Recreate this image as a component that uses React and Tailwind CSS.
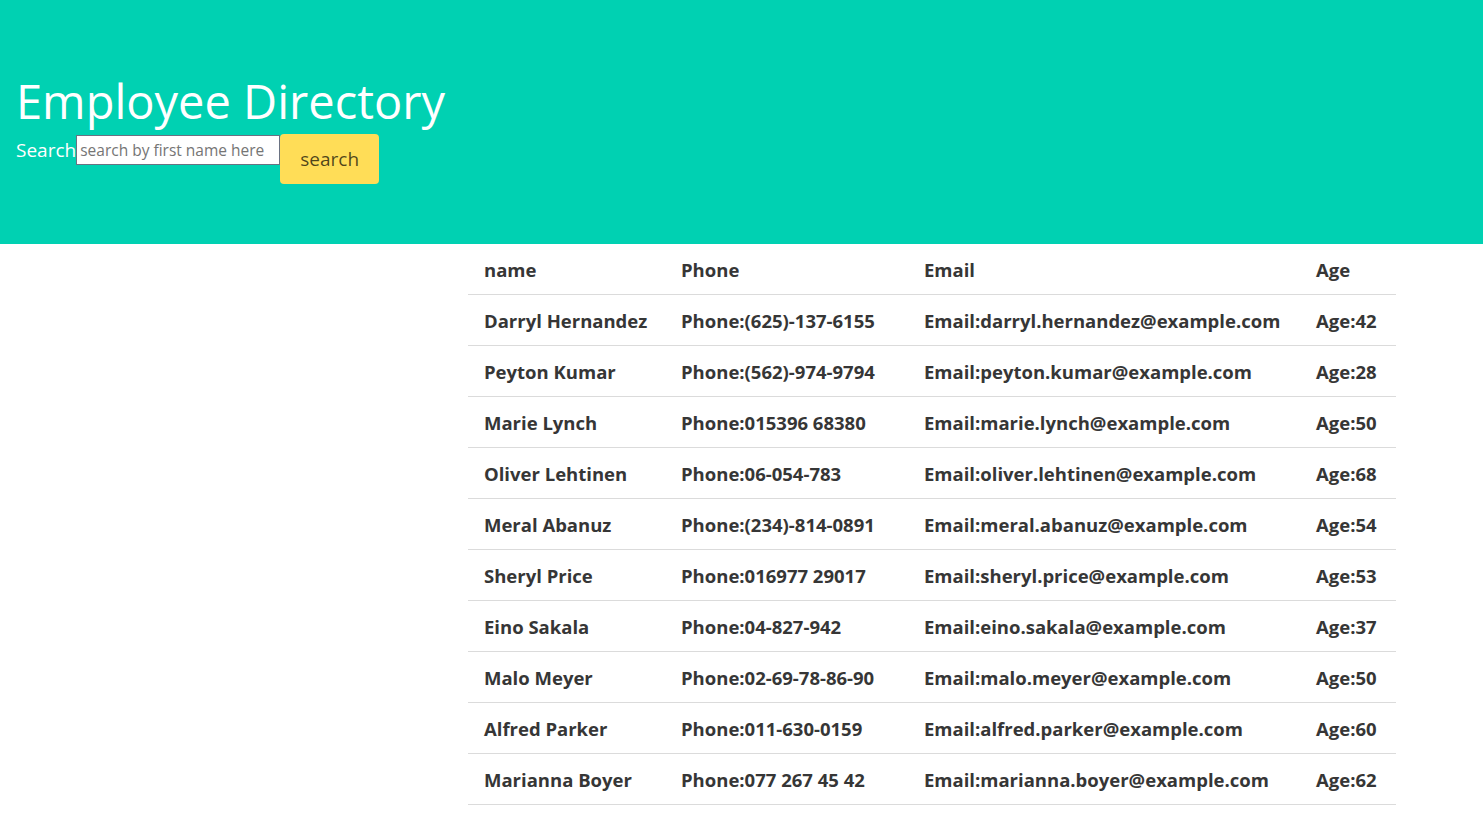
import { useState } from "react";

const employees = [
  { name: "Darryl Hernandez", phone: "(625)-137-6155", email: "darryl.hernandez@example.com", age: 42 },
  { name: "Peyton Kumar", phone: "(562)-974-9794", email: "peyton.kumar@example.com", age: 28 },
  { name: "Marie Lynch", phone: "015396 68380", email: "marie.lynch@example.com", age: 50 },
  { name: "Oliver Lehtinen", phone: "06-054-783", email: "oliver.lehtinen@example.com", age: 68 },
  { name: "Meral Abanuz", phone: "(234)-814-0891", email: "meral.abanuz@example.com", age: 54 },
  { name: "Sheryl Price", phone: "016977 29017", email: "sheryl.price@example.com", age: 53 },
  { name: "Eino Sakala", phone: "04-827-942", email: "eino.sakala@example.com", age: 37 },
  { name: "Malo Meyer", phone: "02-69-78-86-90", email: "malo.meyer@example.com", age: 50 },
  { name: "Alfred Parker", phone: "011-630-0159", email: "alfred.parker@example.com", age: 60 },
  { name: "Marianna Boyer", phone: "077 267 45 42", email: "marianna.boyer@example.com", age: 62 },
];

export default function App() {
  const [query, setQuery] = useState("");

  return (
    <div className="min-h-screen bg-white font-['Open_Sans',sans-serif]">
      <section className="h-[244px] bg-[#00d1b2] px-4 pt-[68px]">
        <h1 className="text-[47px] leading-[66px] text-white">Employee Directory</h1>
        <form className="flex items-start" onSubmit={(e) => e.preventDefault()}>
          <label className="mt-[2px] text-[19px] leading-[28px] text-white">Search</label>
          <input
            value={query}
            onChange={(e) => setQuery(e.target.value)}
            placeholder="search by first name here"
            className="mt-[1px] h-[30px] w-[204px] border border-gray-500 bg-white px-[3px] text-[15.5px] text-[#363636] placeholder:text-[#757575] outline-none"
          />
          <button className="h-[50px] w-[99px] rounded bg-[#ffdd57] pt-[1px] text-[19px] text-black/70">
            search
          </button>
        </form>
      </section>

      <div className="pl-[468px]">
        <table className="w-[928px] table-fixed border-collapse text-[18.5px] font-bold text-[#363636]">
          <colgroup>
            <col className="w-[197px]" />
            <col className="w-[243px]" />
            <col className="w-[392px]" />
            <col className="w-[96px]" />
          </colgroup>
          <thead>
            <tr className="border-b border-[#dbdbdb]">
              <th className="px-4 pt-[11px] pb-[9px] text-left font-bold leading-[30px]">name</th>
              <th className="px-4 pt-[11px] pb-[9px] text-left font-bold leading-[30px]">Phone</th>
              <th className="px-4 pt-[11px] pb-[9px] text-left font-bold leading-[30px]">Email</th>
              <th className="px-4 pt-[11px] pb-[9px] text-left font-bold leading-[30px]">Age</th>
            </tr>
          </thead>
          <tbody>
            {employees.map((emp) => (
              <tr key={emp.email} className="border-b border-[#dbdbdb]">
                <td className="whitespace-nowrap px-4 pt-[11px] pb-[9px] leading-[30px]">{emp.name}</td>
                <td className="whitespace-nowrap px-4 pt-[11px] pb-[9px] leading-[30px]">Phone:{emp.phone}</td>
                <td className="whitespace-nowrap px-4 pt-[11px] pb-[9px] leading-[30px]">Email:{emp.email}</td>
                <td className="whitespace-nowrap px-4 pt-[11px] pb-[9px] leading-[30px]">Age:{emp.age}</td>
              </tr>
            ))}
          </tbody>
        </table>
      </div>
    </div>
  );
}
